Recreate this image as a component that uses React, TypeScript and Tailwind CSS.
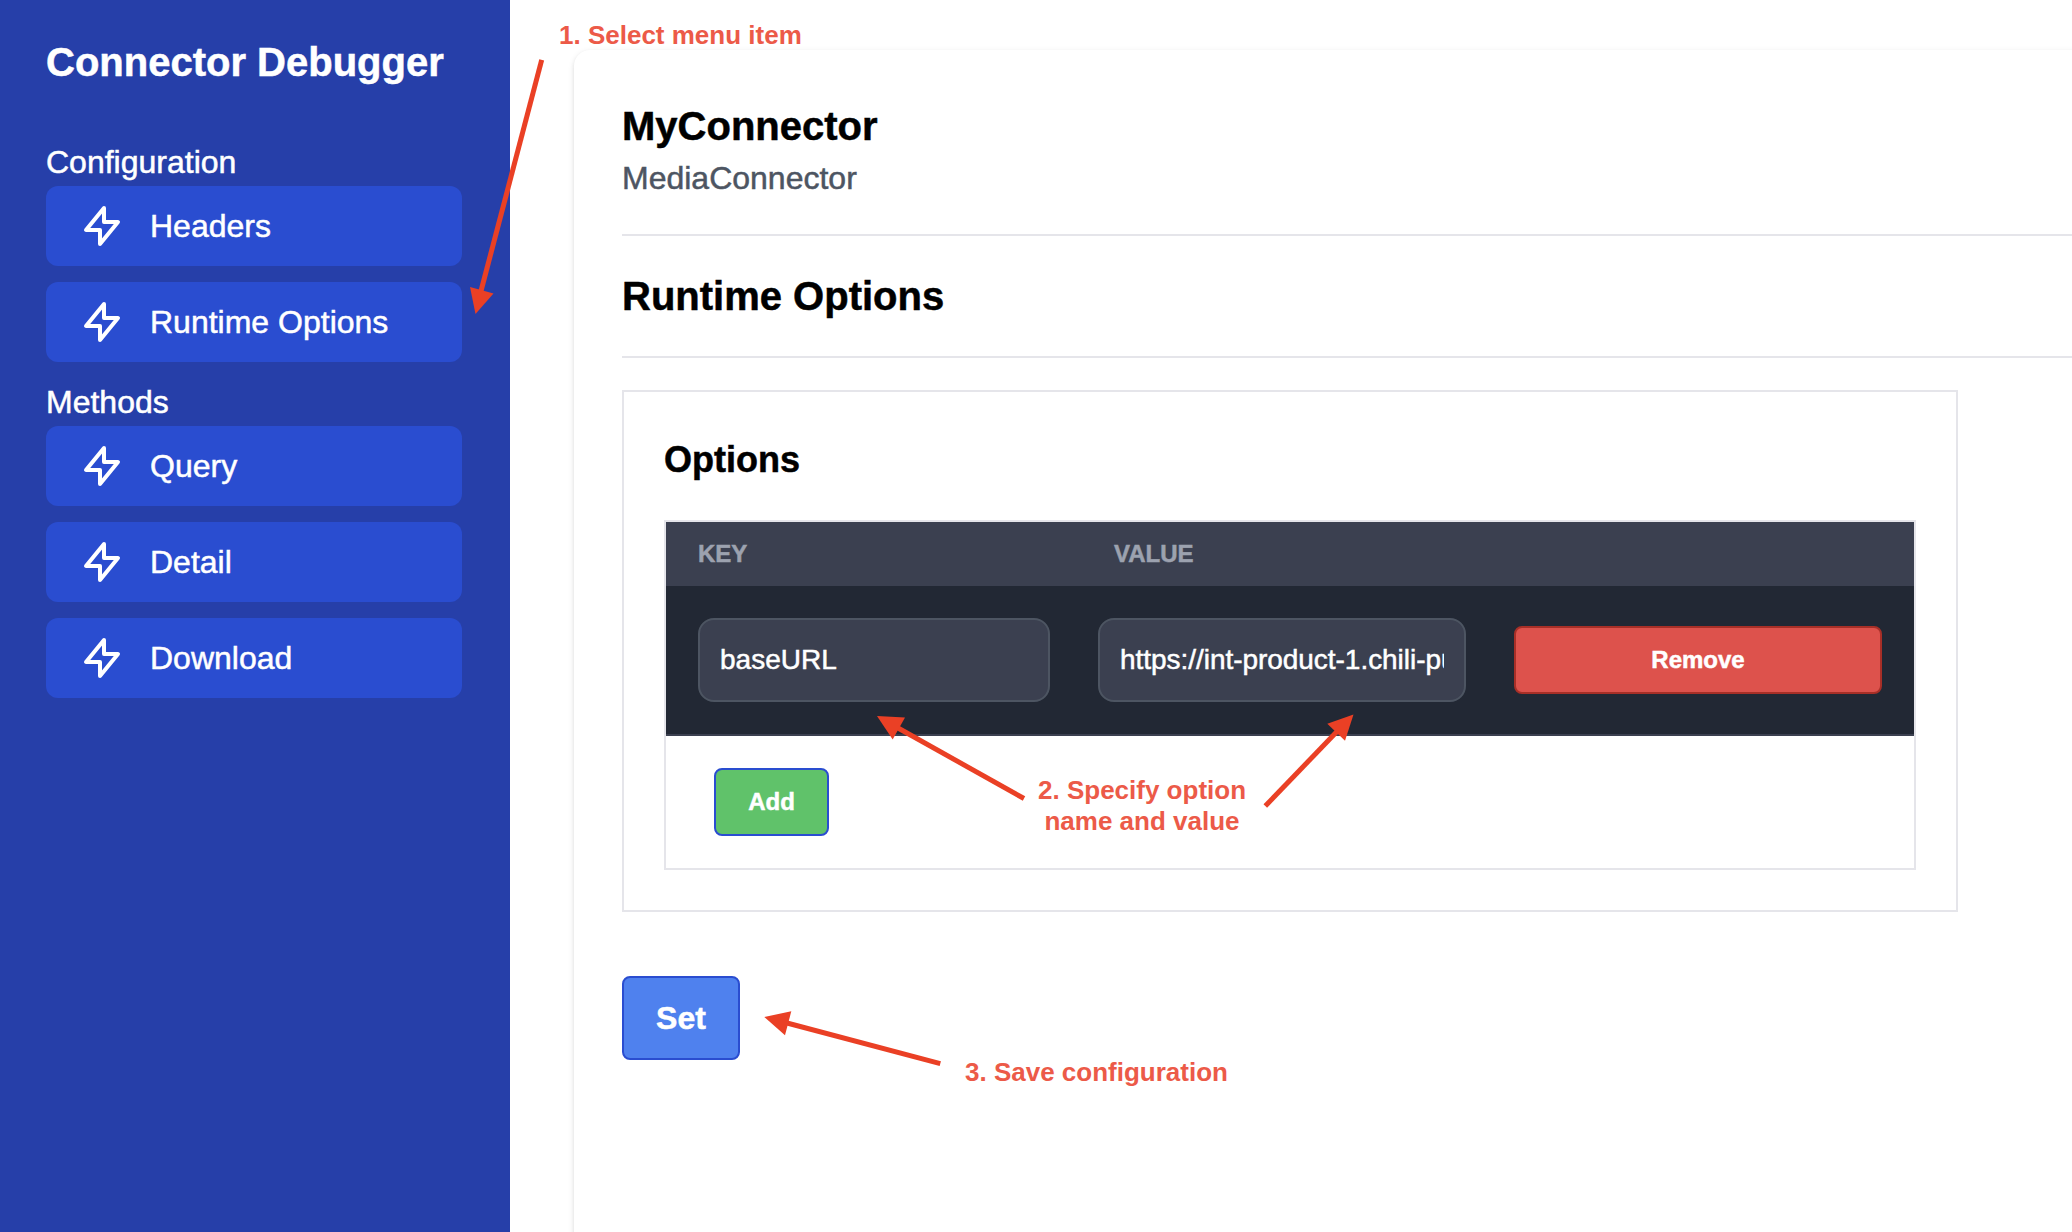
type Arrow = { tail: [number, number]; neck: [number, number]; head: string };

const arrows: Arrow[] = [
  { tail: [541.7, 59.8], neck: [481, 291], head: "475.5,314 470,287 493.5,293.5" },
  { tail: [1024, 798.5], neck: [898, 728], head: "877,716 905,717.5 892.7,739.5" },
  { tail: [1265.3, 806], neck: [1337, 731.5], head: "1353.5,714.5 1327.3,723.7 1345,740.8" },
  { tail: [940.3, 1063.7], neck: [787, 1023], head: "764.3,1017 791.3,1011.3 785,1035.3" },
];

function Bolt() {
  return (
    <svg viewBox="0 0 24 24" className="size-12 shrink-0" fill="none" stroke="currentColor" strokeWidth="2" strokeLinecap="round" strokeLinejoin="round">
      <path d="M13 10V3L4 14h7v7l9-11h-7z" />
    </svg>
  );
}

function MenuSection({ title, items }: { title: string; items: string[] }) {
  return (
    <section className="mb-4">
      <h2 className="h-12 text-[32px] leading-[48px]">{title}</h2>
      <ul className="flex flex-col gap-4">
        {items.map((item) => (
          <li key={item} className="flex h-20 items-center gap-6 rounded-xl bg-[#2a4dd0] px-8 text-[32px] leading-[48px]">
            <Bolt />
            <span>{item}</span>
          </li>
        ))}
      </ul>
    </section>
  );
}

function Annotations() {
  return (
    <div className="pointer-events-none absolute inset-0 text-[26px] leading-[31px] font-bold whitespace-nowrap text-[#ec5a48] [-webkit-text-stroke:0px]">
      <svg viewBox="0 0 2072 1232" className="absolute inset-0 h-full w-full" fill="#ea4025" stroke="#ea4025">
        {arrows.map((a) => (
          <g key={a.head}>
            <line x1={a.tail[0]} y1={a.tail[1]} x2={a.neck[0]} y2={a.neck[1]} strokeWidth="5" />
            <polygon points={a.head} stroke="none" />
          </g>
        ))}
      </svg>
      <p className="absolute top-[20px] left-[559px]">1. Select menu item</p>
      <p className="absolute top-[775px] left-[1038px] text-center">
        2. Specify option
        <br />
        name and value
      </p>
      <p className="absolute top-[1057px] left-[965px]">3. Save configuration</p>
    </div>
  );
}

export default function App() {
  return (
    <div className="relative flex h-[1232px] w-[2072px] overflow-hidden bg-white font-['Liberation_Sans',Arial,sans-serif] text-black [-webkit-text-stroke:0.5px]">
      <aside className="w-[510px] shrink-0 bg-[#263fa9] px-[46px] pt-[34px] pr-12 text-white">
        <h1 className="mb-12 h-14 text-[40px] leading-[56px] font-bold whitespace-nowrap">Connector Debugger</h1>
        <MenuSection title="Configuration" items={["Headers", "Runtime Options"]} />
        <MenuSection title="Methods" items={["Query", "Detail", "Download"]} />
      </aside>

      <main className="flex-1 pt-[50px] pl-16">
        <div className="h-[1300px] w-[1600px] rounded-2xl bg-white pt-12 pl-12 shadow-[0_2px_6px_rgba(0,0,0,0.1),0_2px_4px_rgba(0,0,0,0.06)]">
          <header className="h-[138px] border-b-2 border-[#e5e5ea]">
            <h2 className="text-[40px] leading-[56px] font-bold">MyConnector</h2>
            <p className="text-[32px] leading-[48px] text-[#4d5562]">MediaConnector</p>
          </header>
          <div className="h-[122px] border-b-2 border-[#e5e5ea] pt-8">
            <h2 className="text-[40px] leading-[56px] font-bold">Runtime Options</h2>
          </div>

          <section className="mt-8 h-[522px] w-[1336px] border-2 border-[#e5e5ea] px-10 pt-10">
            <h3 className="mb-8 text-[36px] leading-[56px] font-bold">Options</h3>
            <div className="h-[350px] border-2 border-[#e5e5ea]">
              <div className="flex h-16 items-center bg-[#3b4050] px-8 text-2xl font-bold text-[#9ca2af]">
                <span className="w-[416px]">KEY</span>
                <span>VALUE</span>
              </div>
              <div className="flex h-[150px] items-center gap-12 border-b-2 border-[#3b4050] bg-[#222834] px-8">
                <input defaultValue="baseURL" className="h-[84px] w-[352px] rounded-2xl border-2 border-[#4d5562] bg-[#3b4050] px-5 text-[28px] text-white" />
                <input defaultValue="https://int-product-1.chili-pu" className="h-[84px] w-[368px] rounded-2xl border-2 border-[#4d5562] bg-[#3b4050] px-5 text-[28px] tracking-[-0.04px] text-white" />
                <button className="h-[68px] w-[368px] rounded-lg border-2 border-[#a82f27] bg-[#dd524c] text-2xl font-bold text-white">Remove</button>
              </div>
              <button className="mt-8 ml-12 block h-[68px] w-[115px] rounded-lg border-2 border-[#2a4dd0] bg-[#60c26a] text-2xl font-bold text-white">Add</button>
            </div>
          </section>

          <button className="mt-16 block h-[84px] w-[118px] rounded-lg border-2 border-[#2a4dd0] bg-[#4f81ee] text-[32px] font-bold text-white">Set</button>
        </div>
      </main>

      <Annotations />
    </div>
  );
}
